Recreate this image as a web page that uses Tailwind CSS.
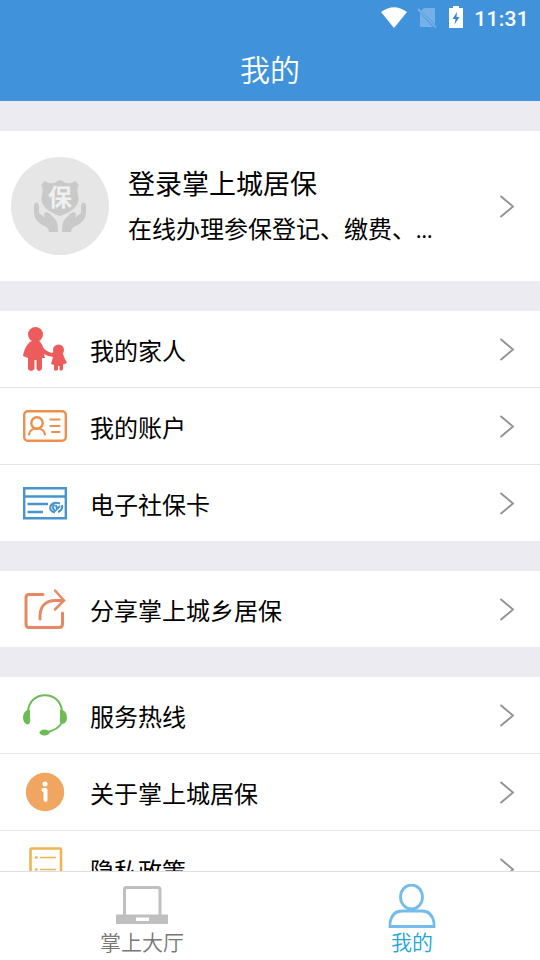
<!DOCTYPE html>
<html lang="zh-CN">
<head>
<meta charset="utf-8">
<meta name="viewport" content="width=device-width, initial-scale=1">
<title>我的</title>
<script src="https://cdn.jsdelivr.net/npm/@tailwindcss/browser@4"></script>
</head>
<body class="bg-[#ebebf1]">
<svg class="hidden"><symbol id="chevron" viewBox="0 0 16 24"><path d="M1.500 2 14 12.500 1.500 23" fill="none" stroke="#929292" stroke-width="1.8"/></symbol></svg>
<div class="flex h-[960px] w-[540px] flex-col overflow-hidden bg-[#ebebf1] font-['Noto_Sans_CJK_SC',sans-serif] text-black">
  <header class="h-[101px] shrink-0 bg-[#4093db] text-white">
    <div class="flex h-9 items-center justify-end pr-[11px]">
      <svg class="mr-2.5 h-9 w-[26px]" viewBox="0 0 26 36"><path d="M0 12Q13 2.500 26 12L13 28Z" fill="#fff"/></svg>
      <svg class="mr-3 h-9 w-5" viewBox="0 0 20 36"><path d="M7 8H18V24L4 10.500ZM3 13V27H16Z" fill="#74b1e6"/><path d="M1 9 19 27.500" stroke="#74b1e6" stroke-width="1.8"/></svg>
      <svg class="mr-[11px] h-9 w-3.5" viewBox="0 0 14 36"><path d="M0 8H4V6H10V8H14V28H0Z" fill="#fff"/><path d="M8 12 3.500 19H6.500L5.500 24.500 10.500 17H7.500Z" fill="#3388d5"/></svg>
      <span class="pt-0.5 font-[Roboto,sans-serif] text-[21px] leading-9 font-medium tracking-[0.3px]">11:31</span>
    </div>
    <h1 class="pt-[10px] text-center text-[30px] leading-[44px] font-[350]">我的</h1>
  </header>
  <main class="min-h-0 flex-1 overflow-hidden pt-[30px]">
    <section class="flex h-[150px] items-center bg-white pr-[25px] pl-[11px]">
      <svg class="h-[98px] w-[98px]" viewBox="0 0 98 98">
        <circle cx="49" cy="49" r="49" fill="#e6e6e6"/>
        <path d="M34 24Q39 28 45 25L49 23L53 25Q59 28 64 24L68 28Q65 32 67.500 40Q69 52 49 59Q29 52 30.500 40Q33 32 30 28Z" fill="#c9c9c9"/>
        <path id="hand" d="M23 49C23 45 27 44 28 49V56L34 61C31 55 36 53 40 58L44 62Q47 65 47 75H38Q38 70 31 68Q23 63 23 55Z" fill="#c9c9c9"/>
        <use href="#hand" transform="translate(98 0) scale(-1 1)"/>
        <text x="49" y="49" text-anchor="middle" font-size="24" font-weight="700" fill="#f0f0f0">保</text>
      </svg>
      <div class="ml-[19px] flex-1">
        <h2 class="text-[27px] leading-[45px]">登录掌上城居保</h2>
        <p class="text-2xl leading-[45px]">在线办理参保登记、缴费、<span class="font-['Noto_Sans',sans-serif] text-[20px] font-medium">...</span></p>
      </div>
      <svg class="h-6 w-4"><use href="#chevron"/></svg>
    </section>

    <section class="mt-[30px] divide-y divide-[#e5e5e7] bg-white">
      <div class="flex h-[77px] items-center pr-[25px] pl-[23px]">
        <svg class="h-11 w-11" viewBox="0 0 44 44" fill="#ed5c5c"><circle cx="12.500" cy="7.500" r="7.500"/><path d="M9 14H16Q18 15 20 20Q22 24 29 26Q31 24 33 24.500H38Q40 26 41 30L44 36L40 37.500V42Q39 45 36.500 43V39H35V43Q31 45 31 42V38L28 37L30 30Q24 29 21 27L22 31H19V42Q16 46 13.500 42V33H11.500V42Q8 46 5 42V31L0 29Q1 22 5 17Q7 14 9 14Z"/><circle cx="35.500" cy="23" r="5.500"/></svg>
        <span class="flex-1 pt-px pl-[23px] text-2xl">我的家人</span><svg class="h-6 w-4"><use href="#chevron"/></svg>
      </div>
      <div class="flex h-[77px] items-center pr-[25px] pl-[23px]">
        <svg class="h-11 w-11" viewBox="0 0 44 44" fill="none" stroke="#ed904f" stroke-width="2.400" stroke-linecap="round"><rect x="1.200" y="7.200" width="41.600" height="29.600" rx="3.500"/><circle cx="14" cy="19" r="5.700"/><path d="M6 30.500Q7 24.500 14 24.500Q21 24.500 22 30.500M27.500 15.500H36.500M27.500 22H36.500M29 28H36.500" stroke-width="2.200"/></svg>
        <span class="flex-1 pt-px pl-[23px] text-2xl">我的账户</span><svg class="h-6 w-4"><use href="#chevron"/></svg>
      </div>
      <div class="flex h-[76px] items-center pr-[25px] pl-[23px]">
        <svg class="h-11 w-11" viewBox="0 0 44 44" fill="none" stroke="#4794cf" stroke-width="2.400"><path d="M1.200 7.200H42.800V37.200H1.200ZM1 15.500H43M4.500 23H25M4.500 31H20"/><path d="M37 22.500Q30 20 27.500 25Q26 30 32 31.500M32 23Q27 27 33 30M33 24 34 28 37 25M35 31Q40 29 39 24" stroke-width="2"/></svg>
        <span class="flex-1 pt-px pl-[23px] text-2xl">电子社保卡</span><svg class="h-6 w-4"><use href="#chevron"/></svg>
      </div>
    </section>

    <section class="mt-[30px] flex h-[76px] items-center bg-white pr-[25px] pl-[23px]">
      <svg class="h-11 w-11" viewBox="0 0 44 44" fill="none" stroke="#e88863" stroke-width="3" stroke-linecap="round"><path d="M20 7.500H6Q3 7.500 3 10.500V37Q3 40.500 6 40.500H36Q39.500 40.500 39.500 37V26M17 32Q16 13.500 33 13.500H40"/><path d="M32 3.500 41 13.500 32 22.500" stroke-width="2.500"/></svg>
      <span class="flex-1 pt-px pl-[23px] text-2xl">分享掌上城乡居保</span><svg class="h-6 w-4"><use href="#chevron"/></svg>
    </section>

    <section class="mt-[30px] divide-y divide-[#e5e5e7] bg-white">
      <div class="flex h-[77px] items-center pr-[25px] pl-[23px]">
        <svg class="h-11 w-11" viewBox="0 0 44 44" fill="#6dbb54"><path d="M5 19C6 -3.500 38 -3.500 39 19M39 29Q36 37 22 39.500" fill="none" stroke="#6dbb54" stroke-width="2"/><path d="M7 17Q1 16 0 24Q0 31 5 31.500Q8 31 7 24ZM37 17Q43 16 44 24Q44 31 39 31Q36 30 37 24Z"/><ellipse cx="21.500" cy="39.500" rx="5" ry="3"/></svg>
        <span class="flex-1 pt-px pl-[23px] text-2xl">服务热线</span><svg class="h-6 w-4"><use href="#chevron"/></svg>
      </div>
      <div class="flex h-[77px] items-center pr-[25px] pl-[23px]">
        <svg class="h-11 w-11" viewBox="0 0 44 44"><circle cx="22" cy="22" r="19.200" fill="#f0a661"/><circle cx="22" cy="14" r="2.500" fill="#fff"/><path d="M20.500 20H22.500V30" fill="none" stroke="#fff" stroke-width="4" stroke-linecap="round" stroke-linejoin="round"/></svg>
        <span class="flex-1 pt-px pl-[23px] text-2xl">关于掌上城居保</span><svg class="h-6 w-4"><use href="#chevron"/></svg>
      </div>
      <div class="flex h-[76px] items-center pr-[25px] pl-[23px]">
        <svg class="h-11 w-11" viewBox="0 0 44 44" fill="none" stroke="#f0b454" stroke-width="2.600"><rect x="7.500" y="1.500" width="30.500" height="41" rx="1"/><path d="M17 10.500H33M17 22.500H33M17 35H33" stroke-width="1.500"/><path d="M12 10.500H14.500M12 22.500H14.500M12 35H14.500"/></svg>
        <span class="flex-1 pt-px pl-[23px] text-2xl">隐私政策</span><svg class="h-6 w-4"><use href="#chevron"/></svg>
      </div>
    </section>
  </main>
  <nav class="grid h-[89px] shrink-0 grid-cols-[284px_256px] border-t border-[#dedede] bg-white text-[21px] leading-[26px] font-[350]">
    <div class="flex flex-col items-center pt-3 text-[#777]">
      <svg class="h-11 w-[52px]" viewBox="0 0 52 44"><path d="M8.500 31V5Q8.500 3.500 10.500 3.500H42Q44 3.500 44 5.500V31" fill="none" stroke="#bfbfbf" stroke-width="3"/><path d="M0 30.500H52V40H0ZM20 33.500V37H33V33.500Z" fill="#bfbfbf" fill-rule="evenodd"/></svg>
      <span>掌上大厅</span>
    </div>
    <div class="flex flex-col items-center pt-3 text-[#24a5d8]">
      <svg class="h-11 w-12" viewBox="0 0 48 44" fill="none" stroke="#75bced" stroke-width="2.800"><ellipse cx="23.500" cy="13" rx="11" ry="12"/><path d="M2 42.500V39Q4 27 14 27H34Q44 27 46 39V42.500Z"/></svg>
      <span>我的</span>
    </div>
  </nav>
</div>
</body>
</html>
